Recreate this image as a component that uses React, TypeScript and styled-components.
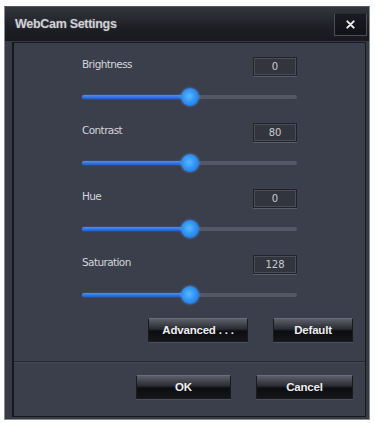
import styled, { createGlobalStyle } from 'styled-components'

const GlobalStyle = createGlobalStyle`
  body {
    margin: 0;
    background: #ffffff;
    font-family: "Liberation Sans", Arial, sans-serif;
  }
`

type Setting = {
  label: string
  value: number
  pos: number
}

const settings: Setting[] = [
  { label: 'Brightness', value: 0, pos: 50 },
  { label: 'Contrast', value: 80, pos: 50 },
  { label: 'Hue', value: 0, pos: 50 },
  { label: 'Saturation', value: 128, pos: 50 },
]

const App = () => {
  return (
    <>
      <GlobalStyle />
      <Window>
        <TitleBar>
          <Title>WebCam Settings</Title>
          <CloseButton aria-label='close'>
            <svg width='9' height='9' viewBox='0 0 10 10'>
              <path d='M1.5 1.5 L8.5 8.5 M8.5 1.5 L1.5 8.5' stroke='#eeeeee' strokeWidth='2.2' strokeLinecap='round' />
            </svg>
          </CloseButton>
        </TitleBar>
        <Panel>
          <Controls>
            {settings.map((s) => (
              <Section key={s.label}>
                <LabelRow>
                  <Label>{s.label}</Label>
                  <ValueBox>{s.value}</ValueBox>
                </LabelRow>
                <SliderRow>
                  <Track>
                    <Fill style={{ width: `${s.pos}%` }} />
                    <Thumb style={{ left: `${s.pos}%` }} />
                  </Track>
                </SliderRow>
              </Section>
            ))}
          </Controls>
          <ButtonRow>
            <DarkButton $width={100}>Advanced . . .</DarkButton>
            <DarkButton $width={80}>Default</DarkButton>
          </ButtonRow>
          <Footer>
            <DarkButton $width={95}>OK</DarkButton>
            <DarkButton $width={97}>Cancel</DarkButton>
          </Footer>
        </Panel>
      </Window>
    </>
  )
}

const Window = styled.div`
  margin: 6px 0 0 4px;
  width: 366px;
  height: 414px;
  box-sizing: border-box;
  display: flex;
  flex-direction: column;
  background: #383a44;
  border: 1px solid #8a8c93;
  border-top-color: #55575e;
`

const TitleBar = styled.div`
  height: 34px;
  display: flex;
  align-items: center;
  justify-content: space-between;
  padding: 0 2px 0 10px;
  background: linear-gradient(#34363e, #1e1f25 60%, #18191e);
`

const Title = styled.div`
  color: #cfd0d4;
  font-size: 12.5px;
  font-weight: bold;
  letter-spacing: -0.3px;
  text-shadow: 0 0 2px rgba(255, 255, 255, 0.25);
`

const CloseButton = styled.button`
  width: 33px;
  height: 23px;
  margin-top: 1px;
  display: flex;
  align-items: center;
  justify-content: center;
  padding: 0;
  background: linear-gradient(#1a1b20, #121317);
  border: 1px solid #4c4e57;
  border-top-color: #2a2b31;
`

const Panel = styled.div`
  flex: 1;
  margin: 1px 3px 2px 7px;
  display: flex;
  flex-direction: column;
  background: #3b3e4b;
  border: 1px solid #17181d;
  border-left-width: 2px;
`

const Controls = styled.div`
  padding: 13px 0 0 68px;
  width: 215px;
  display: flex;
  flex-direction: column;
  gap: 15px;
`

const Section = styled.div`
  display: flex;
  flex-direction: column;
  gap: 11px;
`

const LabelRow = styled.div`
  height: 20px;
  display: flex;
  align-items: center;
  justify-content: space-between;
`

const Label = styled.span`
  color: #d4d5da;
  font-family: "DejaVu Sans", sans-serif;
  font-size: 10.5px;
  letter-spacing: -0.6px;
  padding-bottom: 4px;
`

const ValueBox = styled.div`
  width: 44px;
  height: 19px;
  box-sizing: border-box;
  display: flex;
  align-items: center;
  justify-content: center;
  background: #33353e;
  border: 1px solid #22232a;
  box-shadow: 0 1px 0 #5a5d6a, inset 0 0 0 1px #4a4c57;
  color: #c9cad0;
  font-family: "DejaVu Sans", sans-serif;
  font-size: 10px;
`

const SliderRow = styled.div`
  height: 20px;
  display: flex;
  align-items: center;
`

const Track = styled.div`
  position: relative;
  width: 100%;
  height: 4px;
  border-radius: 2px;
  background: #545766;
`

const Fill = styled.div`
  height: 100%;
  border-radius: 2px;
  background: linear-gradient(#4f8ef5, #1f5fd0);
  box-shadow: 0 0 2px rgba(60, 130, 255, 0.6);
`

const Thumb = styled.div`
  position: absolute;
  top: 50%;
  width: 18px;
  height: 18px;
  margin-left: -9px;
  margin-top: -9px;
  border-radius: 50%;
  background: radial-gradient(circle at 45% 45%, #5ab8ff, #2a8cf0 55%, #1e6bd0);
  box-shadow: 0 0 3px rgba(90, 170, 255, 0.7);
`

const ButtonRow = styled.div`
  margin-top: 13px;
  padding-right: 12px;
  display: flex;
  justify-content: flex-end;
  gap: 25px;
`

const Footer = styled.div`
  margin-top: 19px;
  flex: 1;
  border-top: 1px solid #23252d;
  box-shadow: inset 0 1px 0 #464957;
  padding: 13px 12px 0 0;
  display: flex;
  justify-content: flex-end;
  align-items: flex-start;
  gap: 25px;
`

const DarkButton = styled.button<{ $width: number }>`
  width: ${(p) => p.$width}px;
  height: 24px;
  padding: 0;
  border: 1px solid #1a1b20;
  border-top-color: #6a6d76;
  background: linear-gradient(#5c5f69, #2a2c33 45%, #0c0d10 55%, #15161a);
  color: #eeeef0;
  font-family: "Liberation Sans", Arial, sans-serif;
  font-size: 11.5px;
  font-weight: bold;
  letter-spacing: -0.2px;
  box-shadow: 0 1px 0 #4d505c;
`

export default App
